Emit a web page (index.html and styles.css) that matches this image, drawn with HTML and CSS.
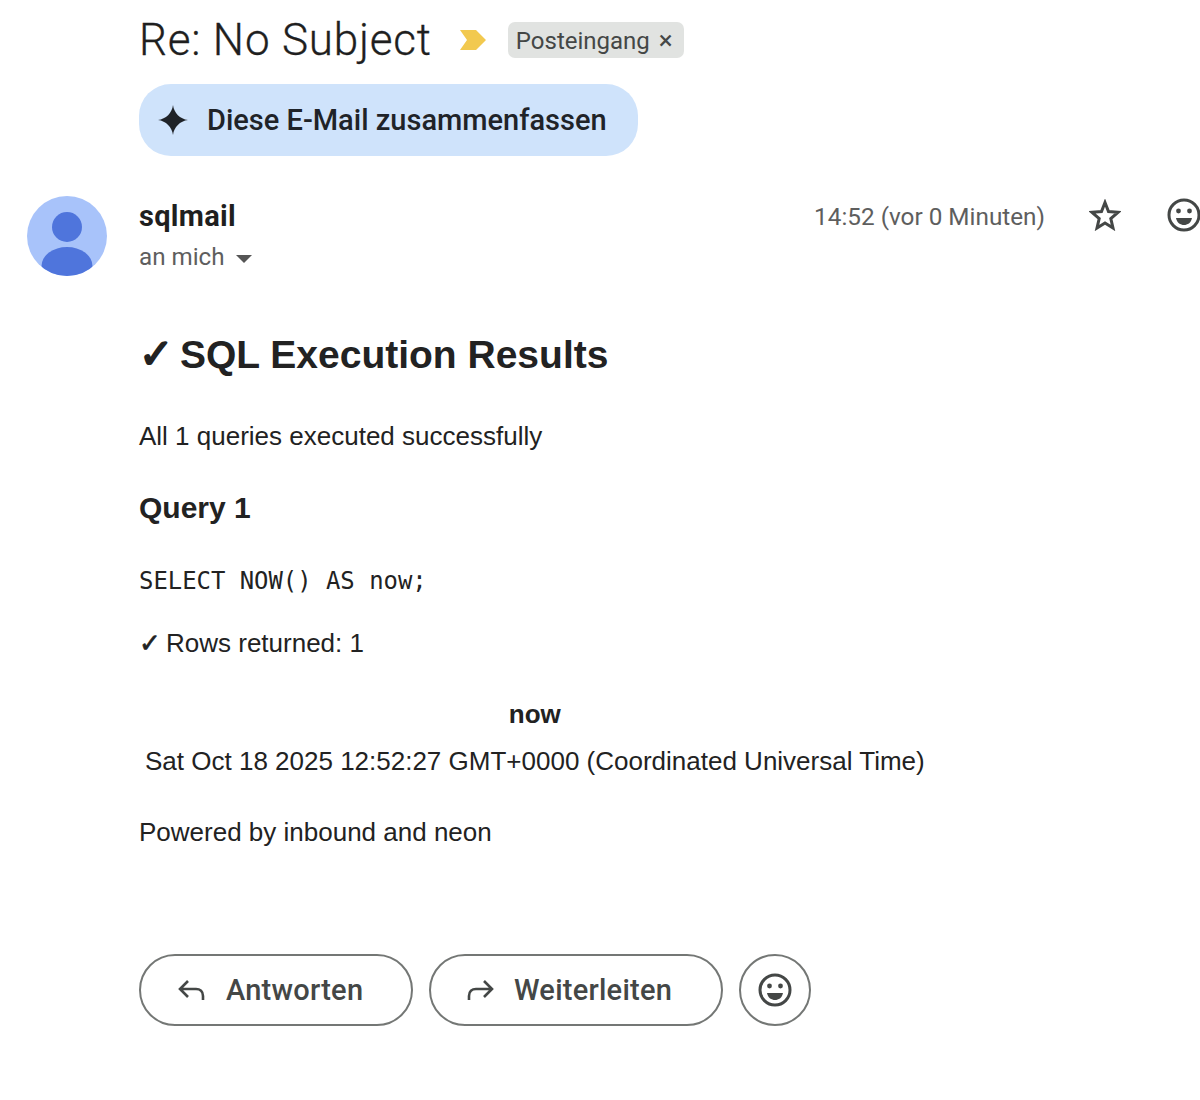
FILE: index.html
```html
<!DOCTYPE html>
<html lang="de">
<head>
<meta charset="utf-8">
<title>Re: No Subject</title>
<link rel="stylesheet" href="styles.css">
</head>
<body>
<main class="page">
  <header class="subject-row">
    <h1 class="subject">Re: No Subject</h1>
    <svg class="marker" viewBox="0 0 26 20" width="26" height="20"><path d="M0 0H16L26 10L16 20H0L7 10Z" fill="#f2c94f"/></svg>
    <span class="label">Posteingang <span class="label-x">×</span></span>
  </header>
  <button class="summary">
    <svg viewBox="0 0 30 30" width="30" height="30"><path d="M15 0C16 8 22 14 30 15C22 16 16 22 15 30C14 22 8 16 0 15C8 14 14 8 15 0Z" fill="#1f2328"/></svg>
    <span>Diese E-Mail zusammenfassen</span>
  </button>
  <section class="message-head">
    <svg class="avatar" viewBox="0 0 80 80" width="80" height="80">
      <defs><clipPath id="c"><circle cx="40" cy="40" r="40"/></clipPath></defs>
      <circle cx="40" cy="40" r="40" fill="#a8c3fa"/>
      <g clip-path="url(#c)" fill="#4f75dc">
        <circle cx="40" cy="31" r="15"/>
        <ellipse cx="40" cy="70" rx="25.500" ry="19"/>
      </g>
    </svg>
    <div class="sender">
      <div class="sender-name">sqlmail</div>
      <div class="recipient">an mich <span class="caret"></span></div>
    </div>
    <div class="meta">
      <span class="time">14:52 (vor 0 Minuten)</span>
      <svg class="star" viewBox="0 0 32 32" width="32" height="32"><path d="M16 3.500L19.500 12.500L29 13.300L21.800 19.500L24 29L16 24L8 29L10.200 19.500L3 13.300L12.500 12.500Z" fill="none" stroke="#444746" stroke-width="3" stroke-linejoin="miter"/></svg>
      <svg class="smile" viewBox="0 0 34 34" width="34" height="34"><circle cx="17" cy="17" r="15" fill="none" stroke="#444746" stroke-width="3"/><circle cx="11.500" cy="13" r="2.400" fill="#444746"/><circle cx="22.500" cy="13" r="2.400" fill="#444746"/><path d="M9 20H25C24 25 20.500 27 17 27C13.500 27 10 25 9 20Z" fill="#444746"/></svg>
    </div>
  </section>
  <article class="mail">
    <h2 class="mail-title"><span class="check-lg">✓</span>SQL Execution Results</h2>
    <p class="mail-text all">All 1 queries executed successfully</p>
    <h3 class="query">Query 1</h3>
    <pre class="sql">SELECT NOW() AS now;</pre>
    <p class="mail-text rows"><span class="check-sm">✓</span>Rows returned: 1</p>
    <table class="result">
      <thead><tr><th>now</th></tr></thead>
      <tbody><tr><td>Sat Oct 18 2025 12:52:27 GMT+0000 (Coordinated Universal Time)</td></tr></tbody>
    </table>
    <p class="mail-text powered">Powered by inbound and neon</p>
  </article>
  <footer class="actions">
    <button class="pill reply">
      <svg viewBox="0 0 30 24" width="30" height="24"><path d="M12 3L4 11L12 19M4 11H20C24 11 27 13.500 27 18V22" fill="none" stroke="#444746" stroke-width="2.600"/></svg>
      <span>Antworten</span>
    </button>
    <button class="pill forward">
      <svg viewBox="0 0 30 24" width="30" height="24"><path d="M18 3L26 11L18 19M26 11H10C6 11 3 13.500 3 18V22" fill="none" stroke="#444746" stroke-width="2.600"/></svg>
      <span>Weiterleiten</span>
    </button>
    <button class="pill round">
      <svg viewBox="0 0 34 34" width="34" height="34"><circle cx="17" cy="17" r="15" fill="none" stroke="#444746" stroke-width="3"/><circle cx="11.500" cy="13" r="2.400" fill="#444746"/><circle cx="22.500" cy="13" r="2.400" fill="#444746"/><path d="M9 20H25C24 25 20.500 27 17 27C13.500 27 10 25 9 20Z" fill="#444746"/></svg>
    </button>
  </footer>
</main>
</body>
</html>
```
FILE: styles.css
```css
* { box-sizing: border-box; }
html, body { margin: 0; padding: 0; background: #fff; overflow: hidden; height: 100%; }
.page { width: 1200px; height: 1100px; overflow: hidden; color: #1f1f1f; font-family: Roboto, "Noto Sans", sans-serif; }

.subject-row { display: flex; align-items: center; height: 80px; padding-left: 139px; }
.subject { margin: 0; font-size: 44px; font-weight: 300; letter-spacing: 0.8px; line-height: 80px; white-space: nowrap; -webkit-text-stroke: 0.3px #1f1f1f; }
.marker { margin-left: 28px; }
.label { margin-left: 22px; width: 176px; height: 36px; padding: 0 7px 0 8px; border-radius: 7px; background: #e1e3e1; color: #444746; font-size: 24px; line-height: 36px; white-space: nowrap; }
.label-x { margin-left: 3px; font-size: 26px; }

.summary { display: flex; align-items: center; gap: 19px; width: 499px; height: 72px; margin: 4px 0 0 139px; padding: 0 0 0 19px; border: 0; border-radius: 32px; background: #cfe3fb; color: #1f2328; font-family: Roboto, sans-serif; font-size: 29px; font-weight: 500; white-space: nowrap; }

.message-head { display: flex; margin-top: 40px; padding-left: 27px; }
.avatar { flex: none; }
.sender { margin-left: 32px; }
.sender-name { font-size: 29px; font-weight: 700; letter-spacing: 0.3px; line-height: 40px; }
.recipient { margin-top: 1px; font-size: 24.200px; line-height: 40px; color: #5e5e5e; }
.caret { display: inline-block; margin-left: 5px; vertical-align: middle; border-left: 8px solid transparent; border-right: 8px solid transparent; border-top: 8px solid #555; }
.meta { display: flex; align-items: flex-start; margin-left: auto; margin-right: -1px; padding-top: 3px; }
.time { margin-top: 2px; margin-right: 44px; font-size: 24.300px; line-height: 32px; color: #5e5e5e; white-space: nowrap; }
.star { margin-right: 46px; }
.smile { margin-top: -1px; }

.mail { padding: 49px 0 0 139px; font-family: "Liberation Sans", Arial, sans-serif; font-size: 26px; color: #222; }
.mail-title { margin: 0; font-size: 39px; line-height: 56px; font-weight: 700; }
.check-lg { display: inline-block; width: 41px; font-family: "DejaVu Sans", sans-serif; font-size: 41px; line-height: 56px; -webkit-text-stroke: 2px #222; }
.check-sm { display: inline-block; width: 27px; font-family: "DejaVu Sans", sans-serif; font-size: 26px; line-height: 30px; -webkit-text-stroke: 0.7px #222; }
.mail-text { margin: 0; line-height: 30px; }
.all { margin-top: 38px; }
.query { margin: 39px 0 0; font-size: 30px; line-height: 36px; font-weight: 700; }
.sql { margin: 40px 0 0; font-family: "DejaVu Sans Mono", monospace; font-size: 23.900px; line-height: 30px; }
.rows { margin-top: 32px; }
.result { margin: 35px 0 0; border-collapse: collapse; }
.result th { padding: 6px; line-height: 30px; text-align: center; }
.result td { padding: 11px 6px 0; line-height: 30px; }
.powered { margin-top: 41px; }

.actions { display: flex; gap: 16px; margin-top: 107px; padding-left: 139px; }
.pill { display: flex; align-items: center; height: 72px; padding: 0 0 0 35px; border: 2px solid #747775; border-radius: 36px; background: #fff; color: #444746; font-family: Roboto, sans-serif; font-size: 29px; font-weight: 500; letter-spacing: 0.25px; white-space: nowrap; }
.reply { width: 274px; gap: 20px; }
.forward { width: 294px; gap: 18px; }
.round { width: 72px; padding: 0; justify-content: center; }
```
